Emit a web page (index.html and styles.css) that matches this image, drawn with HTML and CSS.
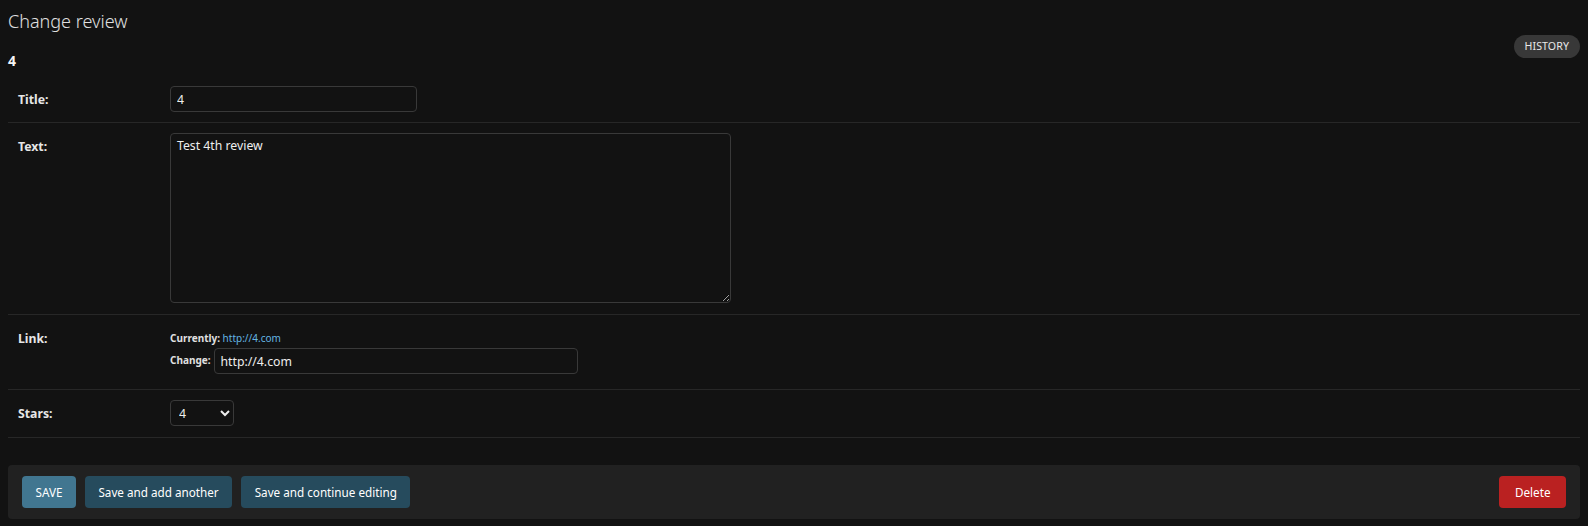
FILE: index.html
```html
<!DOCTYPE html>
<html lang="en">
<head>
<meta charset="utf-8">
<title>Change review</title>
<link rel="stylesheet" href="styles.css">
</head>
<body>
<div class="page">
  <div class="header">
    <div class="titles">
      <h1>Change review</h1>
      <h2>4</h2>
    </div>
    <a class="history" href="#">History</a>
  </div>
  <form class="form">
    <div class="row row-title">
      <label class="lbl" for="id_title">Title:</label>
      <input class="text-input title-input" id="id_title" type="text" value="4">
    </div>
    <div class="row row-text">
      <label class="lbl" for="id_text">Text:</label>
      <textarea class="textarea" id="id_text">Test 4th review</textarea>
    </div>
    <div class="row row-link">
      <label class="lbl" for="id_link">Link:</label>
      <div class="file-upload">
        <div class="current"><span class="sub-lbl">Currently:</span> <a class="link" href="#">http://4.com</a></div>
        <div class="change">
          <span class="sub-lbl change-lbl">Change:</span>
          <input class="text-input link-input" id="id_link" type="text" value="http://4.com">
        </div>
      </div>
    </div>
    <div class="row row-stars">
      <label class="lbl" for="id_stars">Stars:</label>
      <select class="select" id="id_stars">
        <option>1</option>
        <option>2</option>
        <option>3</option>
        <option selected>4</option>
        <option>5</option>
      </select>
    </div>
    <div class="submit-row">
      <div class="submit-left">
        <button type="button" class="btn btn-default">SAVE</button>
        <button type="button" class="btn">Save and add another</button>
        <button type="button" class="btn">Save and continue editing</button>
      </div>
      <button type="button" class="btn btn-delete">Delete</button>
    </div>
  </form>
</div>
</body>
</html>
```
FILE: styles.css
```css
html {
  color-scheme: dark;
}
body {
  margin: 0;
  background: #121212;
  color: #eeeeee;
  font-family: "Noto Sans", sans-serif;
}
.page {
  padding: 0 8px;
}
.header {
  display: flex;
  justify-content: space-between;
  align-items: flex-start;
}
h1 {
  margin: 9px 0 0;
  font-size: 18px;
  line-height: 24px;
  font-weight: 300;
  color: #e0e0e0;
}
h2 {
  margin: 18px 0 5px;
  font-size: 14px;
  line-height: 20px;
  font-weight: 700;
  color: #f5f5f5;
}
.history {
  margin-top: 35px;
  height: 23px;
  padding: 0 11px;
  box-sizing: border-box;
  border-radius: 12px;
  background: #383838;
  color: #e8e8e8;
  text-decoration: none;
  text-transform: uppercase;
  font-size: 10.6px;
  line-height: 23px;
  letter-spacing: 0.1px;
}
.row {
  display: flex;
  align-items: flex-start;
  padding: 10px;
  border-bottom: 1px solid #272727;
}
.lbl {
  width: 152px;
  flex: none;
  padding-top: 5px;
  font-size: 12.25px;
  line-height: 18px;
  font-weight: 700;
  color: #e6e6e6;
}
.text-input {
  box-sizing: border-box;
  height: 26px;
  padding: 0 6px;
  margin: 0;
  background: #121212;
  border: 1px solid #393939;
  border-radius: 4px;
  color: #eeeeee;
  font-family: "Noto Sans", sans-serif;
  font-size: 12.25px;
  outline: none;
}
.title-input {
  width: 247px;
}
.textarea {
  display: block;
  box-sizing: border-box;
  width: 561px;
  height: 170px;
  margin: 0 0 1px;
  padding: 4px 6px;
  background: #121212;
  border: 1px solid #393939;
  border-radius: 4px;
  color: #eeeeee;
  font-family: "Noto Sans", sans-serif;
  font-size: 12.25px;
  line-height: 16.5px;
  outline: none;
}
.file-upload {
  display: flex;
  flex-direction: column;
  padding-top: 3px;
  padding-bottom: 5px;
}
.current {
  height: 20px;
  font-size: 10px;
  line-height: 20px;
  color: #e0e0e0;
}
.sub-lbl {
  font-weight: 700;
  font-size: 10px;
  color: #e0e0e0;
}
.link {
  color: #63b5e3;
  text-decoration: none;
}
.change {
  display: flex;
  align-items: flex-start;
  gap: 3px;
}
.change-lbl {
  padding-top: 4px;
  line-height: 16px;
}
.link-input {
  width: 364px;
}
.select {
  box-sizing: border-box;
  width: 64px;
  height: 26px;
  margin: 0 0 1px;
  padding: 0 4px;
  background: #121212;
  border: 1px solid #393939;
  border-radius: 4px;
  color: #eeeeee;
  font-family: "Noto Sans", sans-serif;
  font-size: 12.25px;
}
.submit-row {
  display: flex;
  justify-content: space-between;
  align-items: center;
  margin-top: 27px;
  padding: 11px 14px;
  background: #212121;
  border-radius: 4px;
}
.submit-left {
  display: flex;
  gap: 9px;
}
.btn {
  height: 32px;
  padding: 0 13.5px;
  border: none;
  border-radius: 4px;
  background: #264b5d;
  color: #ffffff;
  font-family: "Noto Sans", sans-serif;
  font-size: 11.7px;
  cursor: pointer;
}
.btn-default {
  background: #417690;
}
.btn-delete {
  background: #ba2121;
  padding: 0 15.5px;
}
```
